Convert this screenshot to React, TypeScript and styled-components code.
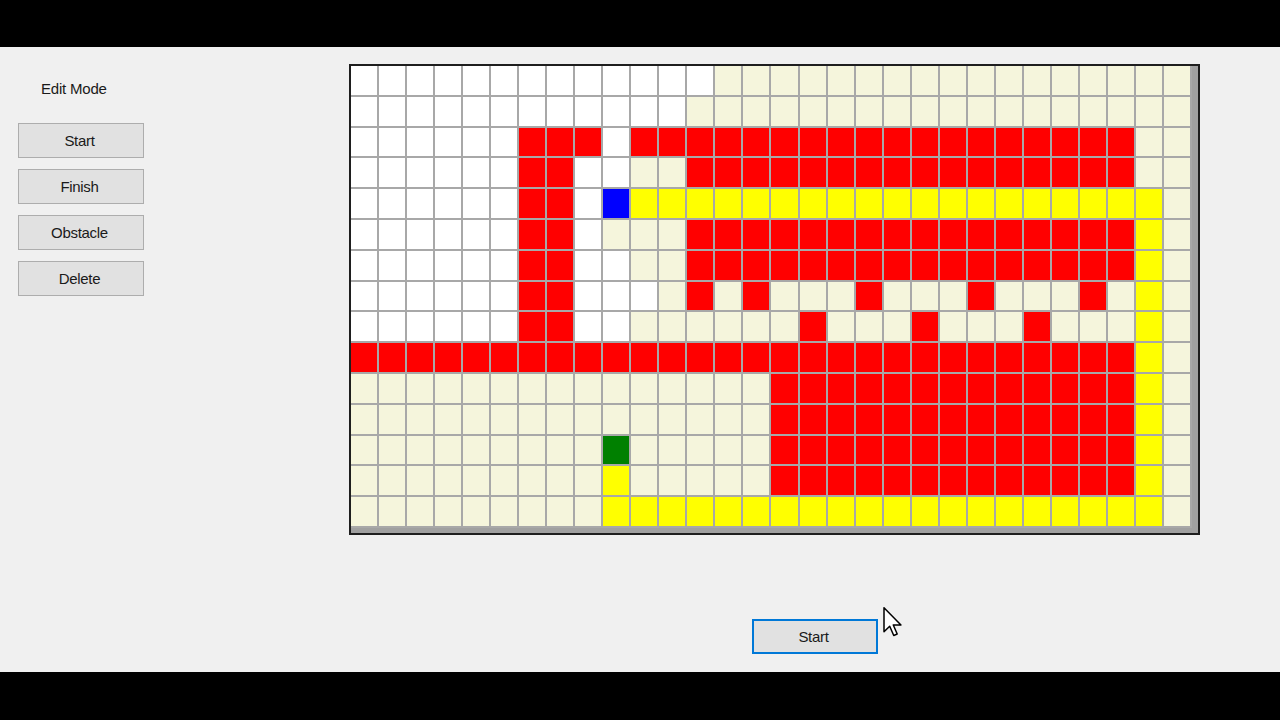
import styled, { createGlobalStyle } from "styled-components"

const GlobalStyle = createGlobalStyle`
html, body {
  margin: 0;
  padding: 0;
  background: #000;
}
* {
  box-sizing: border-box;
}
`

// W blanco, B beige, R obstaculo, Y camino, S inicio, G fin
const mapa = [
  "WWWWWWWWWWWWWBBBBBBBBBBBBBBBBB",
  "WWWWWWWWWWWWBBBBBBBBBBBBBBBBBB",
  "WWWWWWRRRWRRRRRRRRRRRRRRRRRRBB",
  "WWWWWWRRWWBBRRRRRRRRRRRRRRRRBB",
  "WWWWWWRRWSYYYYYYYYYYYYYYYYYYYB",
  "WWWWWWRRWBBBRRRRRRRRRRRRRRRRYB",
  "WWWWWWRRWWBBRRRRRRRRRRRRRRRRYB",
  "WWWWWWRRWWWBRBRBBBRBBBRBBBRBYB",
  "WWWWWWRRWWBBBBBBRBBBRBBBRBBBYB",
  "RRRRRRRRRRRRRRRRRRRRRRRRRRRRYB",
  "BBBBBBBBBBBBBBBRRRRRRRRRRRRRYB",
  "BBBBBBBBBBBBBBBRRRRRRRRRRRRRYB",
  "BBBBBBBBBGBBBBBRRRRRRRRRRRRRYB",
  "BBBBBBBBBYBBBBBRRRRRRRRRRRRRYB",
  "BBBBBBBBBYYYYYYYYYYYYYYYYYYYYB",
]

const colores: Record<string, string> = {
  W: "#ffffff",
  B: "#f5f5dc",
  R: "#ff0000",
  Y: "#ffff00",
  S: "#0000ff",
  G: "#008000",
}

const Pantalla = styled.div`
display: flex;
flex-direction: column;
width: 1280px;
height: 720px;
`

const Barra = styled.div<{ $alto: number }>`
height: ${(p) => p.$alto}px;
flex-shrink: 0;
background: #000;
`

const Ventana = styled.div`
position: relative;
flex: 1;
display: grid;
grid-template-columns: 349px auto;
background: #f0f0f0;
font-family: "Liberation Sans", Arial, sans-serif;
font-size: 15px;
color: #000;
`

const Lateral = styled.div`
display: flex;
flex-direction: column;
padding: 33px 0 0 18px;
`

const Etiqueta = styled.div`
margin-left: 23px;
line-height: 18px;
letter-spacing: -0.2px;
color: #1a1a1a;
`

const Botones = styled.div`
display: flex;
flex-direction: column;
gap: 11px;
margin-top: 25px;
`

const Boton = styled.button<{ $activo?: boolean }>`
width: 126px;
height: 35px;
padding: 0 3px 0 0;
background: #e1e1e1;
border: ${(p) => (p.$activo ? "2px solid #0078d7" : "1px solid #adadad")};
font-family: "Liberation Sans", Arial, sans-serif;
font-size: 15px;
letter-spacing: -0.3px;
color: #1a1a1a;
`

const Principal = styled.div`
display: flex;
flex-direction: column;
align-items: flex-start;
padding-top: 17px;
`

const Tablero = styled.div`
border: 2px solid #1e1e1e;
background: #a0a0a0;
padding: 0 6px 5px 0;
`

const Grilla = styled.div`
display: grid;
grid-template-columns: repeat(30, 1fr);
grid-template-rows: repeat(15, 1fr);
width: 841px;
height: 462px;
`

const Celda = styled.div<{ $color: string }>`
background: ${(p) => p.$color};
border-right: 2px solid #a8a8a8;
border-bottom: 2px solid #a8a8a8;
`

const PieBoton = styled.div`
margin: 84px 0 0 403px;
`

const Cursor = styled.svg`
position: absolute;
left: 883px;
top: 560px;
`

export default function App() {
  return (
    <Pantalla>
      <GlobalStyle />
      <Barra $alto={47} />
      <Ventana>
        <Lateral>
          <Etiqueta>Edit Mode</Etiqueta>
          <Botones>
            <Boton>Start</Boton>
            <Boton>Finish</Boton>
            <Boton>Obstacle</Boton>
            <Boton>Delete</Boton>
          </Botones>
        </Lateral>
        <Principal>
          <Tablero>
            <Grilla>
              {mapa.map((fila, r) =>
                fila.split("").map((c, i) => (
                  <Celda key={r + "-" + i} $color={colores[c]} />
                ))
              )}
            </Grilla>
          </Tablero>
          <PieBoton>
            <Boton $activo>Start</Boton>
          </PieBoton>
        </Principal>
        <Cursor width="20" height="30" viewBox="0 0 13 20">
          <path
            d="M0.5 0.5 L0.5 16.5 L4.3 12.8 L7 19 L9.3 18 L6.7 12 L11.8 12 Z"
            fill="#fff"
            stroke="#000"
            strokeWidth="1"
            strokeLinejoin="round"
          />
        </Cursor>
      </Ventana>
      <Barra $alto={48} />
    </Pantalla>
  )
}
